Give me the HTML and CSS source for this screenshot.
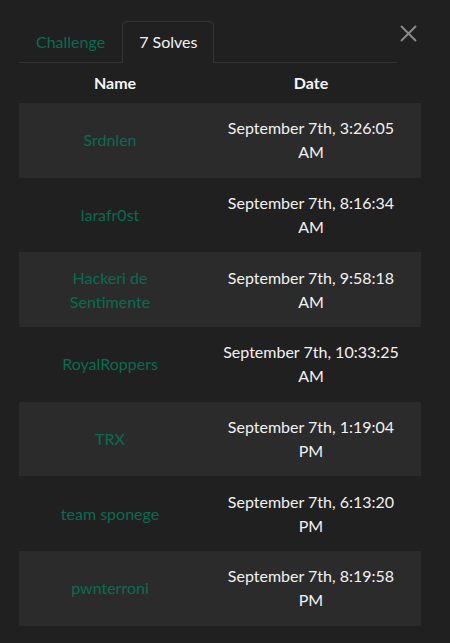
FILE: index.html
```html
<!DOCTYPE html>
<html lang="en">
<head>
<meta charset="utf-8">
<link rel="stylesheet" href="styles.css">
</head>
<body>
<div class="modal">
  <div class="head">
    <ul class="tabs">
      <li><a class="tab" href="#">Challenge</a></li>
      <li><a class="tab active" href="#">7 Solves</a></li>
    </ul>
    <button class="close" aria-label="Close">
      <svg width="17" height="17" viewBox="0 0 17 17"><path d="M1 1 L16 16 M16 1 L1 16" stroke="#8a8a8a" stroke-width="2" fill="none"/></svg>
    </button>
  </div>
  <table class="solves">
    <thead>
      <tr><th class="c-name">Name</th><th class="c-date">Date</th></tr>
    </thead>
    <tbody>
      <tr><td class="c-name"><a href="#">Srdnlen</a></td><td class="c-date">September 7th, 3:26:05 AM</td></tr>
      <tr><td class="c-name"><a href="#">larafr0st</a></td><td class="c-date">September 7th, 8:16:34 AM</td></tr>
      <tr><td class="c-name"><a href="#">Hackeri de Sentimente</a></td><td class="c-date">September 7th, 9:58:18 AM</td></tr>
      <tr><td class="c-name"><a href="#">RoyalRoppers</a></td><td class="c-date">September 7th, 10:33:25 AM</td></tr>
      <tr><td class="c-name"><a href="#">TRX</a></td><td class="c-date">September 7th, 1:19:04 PM</td></tr>
      <tr><td class="c-name"><a href="#">team sponege</a></td><td class="c-date">September 7th, 6:13:20 PM</td></tr>
      <tr><td class="c-name"><a href="#">pwnterroni</a></td><td class="c-date">September 7th, 8:19:58 PM</td></tr>
    </tbody>
  </table>
</div>
</body>
</html>
```
FILE: styles.css
```css
html, body {
  margin: 0;
  padding: 0;
  background: #202020;
  font-family: Lato, "Open Sans", sans-serif;
  font-size: 16px;
  line-height: 24px;
  color: #f0f0f0;
}
.modal {
  padding: 0 29px 0 19px;
}
.head {
  display: flex;
  align-items: flex-start;
}
.tabs {
  list-style: none;
  margin: 0;
  padding: 21px 0 0 0;
  width: 378px;
  display: flex;
  border-bottom: 1px solid #333;
}
.tabs li {
  margin-bottom: -1px;
}
.tab {
  display: block;
  padding: 8px 16px;
  border: 1px solid transparent;
  border-top-left-radius: 5px;
  border-top-right-radius: 5px;
  color: #0a6b52;
  text-decoration: none;
}
.tab.active {
  color: #f2f2f2;
  border-color: #353535 #353535 #202020;
  background: #202020;
}
.close {
  margin: 25px 0 0 3px;
  padding: 0;
  border: 0;
  background: none;
  width: 17px;
  height: 17px;
  display: block;
}
.close svg { display: block; }
.solves {
  width: 402px;
  border-collapse: collapse;
  table-layout: fixed;
}
.solves th, .solves td {
  box-sizing: border-box;
}
.solves th {
  font-weight: 700;
  padding: 8px 16px;
  text-align: center;
  color: #f5f5f5;
}
.solves th.c-name { width: 182px; padding-left: 26px; padding-right: 16px; }
.solves th.c-date { width: 220px; }
.solves td {
  padding: 13.35px 16px;
  text-align: center;
  vertical-align: middle;
}
.solves tbody tr:nth-child(odd) {
  background: #2b2b2b;
}
.solves td a {
  color: #0a6b52;
  text-decoration: none;
}
.solves td.c-date {
  color: #f2f2f2;
}
```
